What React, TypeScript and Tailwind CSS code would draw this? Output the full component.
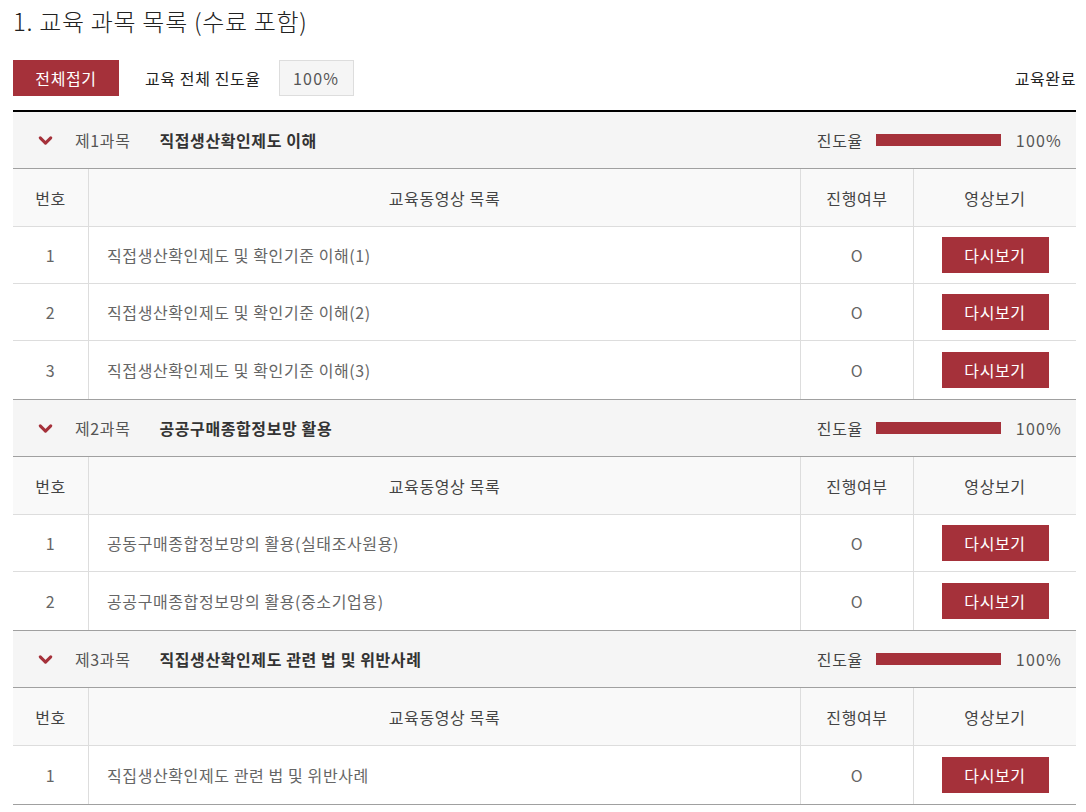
import { ChevronDown } from 'lucide-react';

type Lesson = { no: number; title: string; done: string };
type Course = { idx: number; name: string; rate: number; lessons: Lesson[] };

const courses: Course[] = [
  {
    idx: 1,
    name: '직접생산확인제도 이해',
    rate: 100,
    lessons: [
      { no: 1, title: '직접생산확인제도 및 확인기준 이해(1)', done: 'O' },
      { no: 2, title: '직접생산확인제도 및 확인기준 이해(2)', done: 'O' },
      { no: 3, title: '직접생산확인제도 및 확인기준 이해(3)', done: 'O' },
    ],
  },
  {
    idx: 2,
    name: '공공구매종합정보망 활용',
    rate: 100,
    lessons: [
      { no: 1, title: '공동구매종합정보망의 활용(실태조사원용)', done: 'O' },
      { no: 2, title: '공공구매종합정보망의 활용(중소기업용)', done: 'O' },
    ],
  },
  {
    idx: 3,
    name: '직집생산확인제도 관련 법 및 위반사례',
    rate: 100,
    lessons: [{ no: 1, title: '직집생산확인제도 관련 법 및 위반사례', done: 'O' }],
  },
];

const cols = 'grid grid-cols-[76px_712px_113px_1fr]';

function CourseBlock({ course, first }: { course: Course; first: boolean }) {
  return (
    <div>
      {/* Course header */}
      <div
        className={`flex items-center bg-[#f5f5f5] border-b border-[#a0a0a0] ${
          first ? 'h-[57px]' : 'border-t h-[58px]'
        }`}
      >
        <ChevronDown className="ml-[22px] w-[21px] h-[21px] text-[#a5313a]" strokeWidth={3.5} />
        <span className="ml-[19px] text-[#555]">제{course.idx}과목</span>
        <span className="ml-[29px] font-bold text-[#333]">{course.name}</span>
        <div className="ml-auto flex items-center pr-[14px]">
          <span className="text-[#444]">진도율</span>
          <div className="ml-[13px] w-[125px] h-[12px] bg-[#e5e5e5]">
            <div className="h-full bg-[#a5313a]" style={{ width: `${course.rate}%` }} />
          </div>
          <span className="ml-[15px] text-[#555] tracking-[1.2px]">{course.rate}%</span>
        </div>
      </div>

      {/* Column header */}
      <div className={`${cols} h-[58px] bg-[#f9f9f9] border-b border-[#dddddd] text-[#444]`}>
        <div className="flex items-center justify-center border-r border-[#dddddd]">번호</div>
        <div className="flex items-center justify-center border-r border-[#dddddd]">교육동영상 목록</div>
        <div className="flex items-center justify-center border-r border-[#dddddd]">진행여부</div>
        <div className="flex items-center justify-center">영상보기</div>
      </div>

      {/* Lessons */}
      {course.lessons.map((l, i) => {
        const last = i === course.lessons.length - 1;
        return (
          <div
            key={l.no}
            className={`${cols} border-[#dddddd] text-[#666] ${last ? 'h-[58px]' : 'h-[57px] border-b'}`}
          >
            <div className="flex items-center justify-center border-r border-[#dddddd]">{l.no}</div>
            <div className="flex items-center pl-[18px] border-r border-[#dddddd]">{l.title}</div>
            <div className="flex items-center justify-center border-r border-[#dddddd]">{l.done}</div>
            <div className="flex items-center justify-center">
              <button className="w-[107px] h-[36px] bg-[#a5313a] text-white">다시보기</button>
            </div>
          </div>
        );
      })}
    </div>
  );
}

export default function App() {
  return (
    <div
      className="w-[1086px] bg-white pl-[13px] pr-[10px] text-[16px] tracking-[0.6px]"
      style={{ fontFamily: '"Noto Sans CJK KR", "Noto Sans", sans-serif' }}
    >
      <h1 className="pt-[3px] h-[44px] text-[24px] leading-[36px] text-[#222] font-light tracking-[0.7px]">
        1. 교육 과목 목록 (수료 포함)
      </h1>

      {/* Summary bar */}
      <div className="mt-[16px] flex items-center">
        <button className="w-[106px] h-[36px] bg-[#a5313a] text-white">전체접기</button>
        <span className="ml-[26px] text-[#222]">교육 전체 진도율</span>
        <div className="ml-[18px] w-[75px] h-[36px] flex items-center justify-center bg-[#f5f5f5] border border-[#dddddd] text-[#555] tracking-[1.2px]">
          100%
        </div>
        <span className="ml-auto text-[#222]">교육완료</span>
      </div>

      {/* Course list */}
      <div className="mt-[14px] border-t-2 border-t-black border-b border-b-[#a0a0a0]">
        {courses.map((c, i) => (
          <CourseBlock key={c.idx} course={c} first={i === 0} />
        ))}
      </div>
    </div>
  );
}
